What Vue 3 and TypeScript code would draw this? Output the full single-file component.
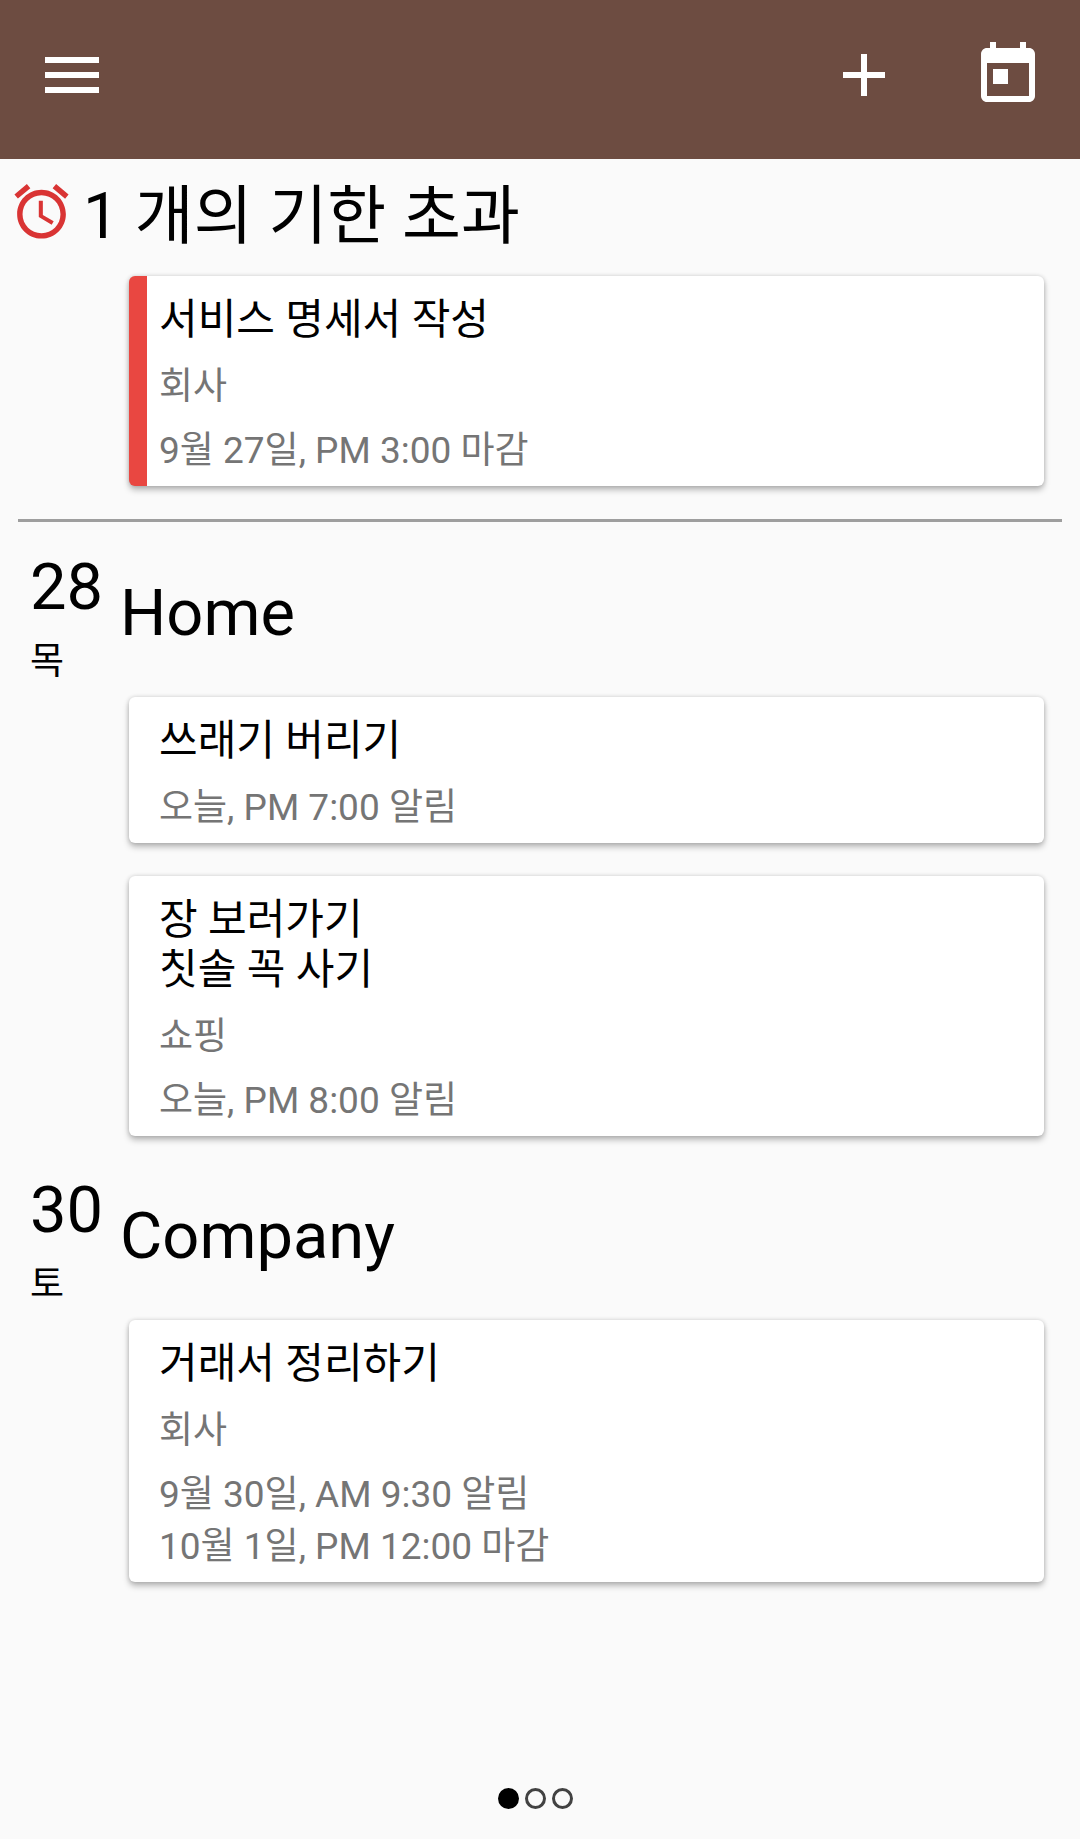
<script setup lang="ts">
import { ref } from 'vue'

interface Task {
  id: number
  title: string[]
  list?: string
  times: string[]
}

interface Day {
  date: number
  weekday: string
  place: string
  tasks: Task[]
}

const overdue: Task[] = [
  { id: 1, title: ['서비스 명세서 작성'], list: '회사', times: ['9월 27일, PM 3:00 마감'] },
]

const days: Day[] = [
  {
    date: 28,
    weekday: '목',
    place: 'Home',
    tasks: [
      { id: 2, title: ['쓰래기 버리기'], times: ['오늘, PM 7:00 알림'] },
      { id: 3, title: ['장 보러가기', '칫솔 꼭 사기'], list: '쇼핑', times: ['오늘, PM 8:00 알림'] },
    ],
  },
  {
    date: 30,
    weekday: '토',
    place: 'Company',
    tasks: [
      {
        id: 4,
        title: ['거래서 정리하기'],
        list: '회사',
        times: ['9월 30일, AM 9:30 알림', '10월 1일, PM 12:00 마감'],
      },
    ],
  },
]

const pageCount = 3
const page = ref(1)
</script>

<template>
  <div class="screen">
    <header class="toolbar">
      <button class="icon-button" type="button" aria-label="메뉴">
        <svg viewBox="0 0 24 24"><path d="M3 18h18v-2H3v2zm0-5h18v-2H3v2zm0-7v2h18V6H3z" /></svg>
      </button>
      <div class="actions">
        <button class="icon-button" type="button" aria-label="추가">
          <svg viewBox="0 0 24 24"><path d="M19 13h-6v6h-2v-6H5v-2h6V5h2v6h6v2z" /></svg>
        </button>
        <button class="icon-button" type="button" aria-label="오늘">
          <svg viewBox="0 0 24 24">
            <path
              d="M19 3h-1V1h-2v2H8V1H6v2H5c-1.11 0-1.99.9-1.99 2L3 19c0 1.1.89 2 2 2h14c1.1 0 2-.9 2-2V5c0-1.1-.9-2-2-2zm0 16H5V8h14v11zM7 10h5v5H7z"
            />
          </svg>
        </button>
      </div>
    </header>

    <main class="content">
      <section class="overdue">
        <h1 class="overdue-heading">
          <svg class="alarm" viewBox="0 0 24 24" aria-hidden="true">
            <path
              d="M22 5.72l-4.6-3.86-1.29 1.53 4.6 3.86L22 5.72zM7.88 3.39L6.6 1.86 2 5.71l1.29 1.53 4.59-3.85zM12.5 8H11v6l4.75 2.85.75-1.23-4-2.37V8zM12 4c-4.97 0-9 4.03-9 9s4.02 9 9 9c4.97 0 9-4.03 9-9s-4.03-9-9-9zm0 16c-3.87 0-7-3.13-7-7s3.13-7 7-7 7 3.13 7 7-3.13 7-7 7z"
            />
          </svg>
          <span>{{ overdue.length }} 개의 기한 초과</span>
        </h1>
        <ul class="cards">
          <li v-for="task in overdue" :key="task.id" class="card late">
            <h3 class="title"><span v-for="line in task.title" :key="line" class="line">{{ line }}</span></h3>
            <p v-if="task.list" class="detail">{{ task.list }}</p>
            <p class="detail"><span v-for="time in task.times" :key="time" class="line">{{ time }}</span></p>
          </li>
        </ul>
      </section>

      <hr class="divider" />

      <div class="days">
        <section v-for="day in days" :key="day.date">
          <div class="day-heading">
            <div class="date">
              <span class="number">{{ day.date }}</span>
              <span class="weekday">{{ day.weekday }}</span>
            </div>
            <h2 class="place">{{ day.place }}</h2>
          </div>
          <ul class="cards">
            <li v-for="task in day.tasks" :key="task.id" class="card">
              <h3 class="title"><span v-for="line in task.title" :key="line" class="line">{{ line }}</span></h3>
              <p v-if="task.list" class="detail">{{ task.list }}</p>
              <p class="detail"><span v-for="time in task.times" :key="time" class="line">{{ time }}</span></p>
            </li>
          </ul>
        </section>
      </div>
    </main>

    <nav class="pager" aria-label="페이지">
      <button
        v-for="n in pageCount"
        :key="n"
        type="button"
        class="dot"
        :class="{ current: n === page }"
        :aria-label="`${n} 페이지`"
        @click="page = n"
      ></button>
    </nav>
  </div>
</template>

<style>
body {
  margin: 0;
  background: #fafafa;
}
</style>

<style scoped>
.screen {
  display: flex;
  flex-direction: column;
  box-sizing: border-box;
  min-height: 100vh;
  background: #fafafa;
  color: #000;
  font-family: Roboto, "Noto Sans CJK KR", sans-serif;
}

h1,
h2,
h3,
p,
ul {
  margin: 0;
  padding: 0;
  font-weight: 400;
  list-style: none;
}

button {
  padding: 0;
  border: 0;
  background: none;
  cursor: pointer;
}

.toolbar {
  display: flex;
  justify-content: space-between;
  padding: 39px 36px 48px;
  background: #6d4c41;
}

.actions {
  display: flex;
  gap: 72px;
}

.icon-button {
  width: 72px;
  height: 72px;
  color: #fff;
}

svg {
  display: block;
  width: 100%;
  height: 100%;
  fill: currentColor;
}

.content {
  padding-top: 19px;
}

.overdue-heading {
  display: flex;
  gap: 9px;
  padding-left: 9px;
  margin-bottom: 21px;
  font-size: 64px;
  line-height: 77px;
}

.alarm {
  flex: none;
  width: 65px;
  height: 65px;
  margin-top: 1px;
  color: #d93434;
}

.cards {
  display: flex;
  flex-direction: column;
  gap: 33px;
  padding: 0 36px 0 129px;
}

.card {
  display: flex;
  flex-direction: column;
  gap: 12px;
  padding: 19px 12px 9px 30px;
  border-radius: 6px;
  background: #fff;
  box-shadow: 0 4px 6px rgba(0, 0, 0, 0.26), 0 0 4px rgba(0, 0, 0, 0.16);
}

.card.late {
  padding-left: 12px;
  border-left: 18px solid #e94741;
}

.line {
  display: block;
}

.title {
  margin-bottom: 4px;
  font-size: 42px;
  line-height: 50px;
}

.detail {
  color: #757575;
  font-size: 37px;
  line-height: 52px;
}

.divider {
  height: 3px;
  margin: 33px 18px 27px;
  border: 0;
  background: #9e9e9e;
}

.days {
  display: flex;
  flex-direction: column;
  gap: 36px;
}

.day-heading {
  display: flex;
  min-height: 148px;
  padding-left: 30px;
}

.date {
  display: flex;
  flex-direction: column;
  gap: 10px;
  width: 90px;
}

.number,
.place {
  font-size: 65px;
  line-height: 77px;
}

.weekday {
  font-size: 37px;
  line-height: 52px;
}

.place {
  padding-top: 26px;
}

.pager {
  display: flex;
  justify-content: center;
  gap: 6px;
  margin-top: auto;
  padding: 30px 9px 30px 0;
}

.dot {
  box-sizing: border-box;
  width: 21px;
  height: 21px;
  border: 3px solid #424242;
  border-radius: 50%;
}

.dot.current {
  border-color: #000;
  background: #000;
}
</style>
